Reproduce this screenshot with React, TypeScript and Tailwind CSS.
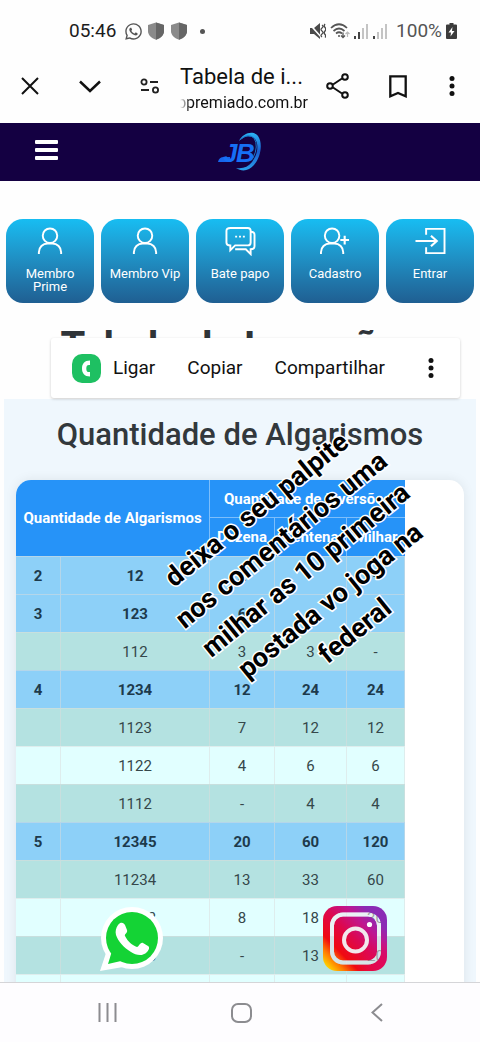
import React from "react"
import { FaWhatsapp } from "react-icons/fa"

type Row = { head?: boolean; cells: string[] }

const rows: Row[] = [
  { head: true, cells: ["2", "12", "2", "-", "-"] },
  { head: true, cells: ["3", "123", "6", "6", "-"] },
  { cells: ["", "112", "3", "3", "-"] },
  { head: true, cells: ["4", "1234", "12", "24", "24"] },
  { cells: ["", "1123", "7", "12", "12"] },
  { cells: ["", "1122", "4", "6", "6"] },
  { cells: ["", "1112", "-", "4", "4"] },
  { head: true, cells: ["5", "12345", "20", "60", "120"] },
  { cells: ["", "11234", "13", "33", "60"] },
  { cells: ["", "11223", "8", "18", "30"] },
  { cells: ["", "11123", "-", "13", "20"] },
  { cells: ["", "", "", "", ""] },
]

const rowColor = (row: Row, index: number) => {
  if (row.head) return "h-[38px] bg-[#8dd0f8] font-bold text-[#1d3a4c]"
  return index % 2 === 0
    ? "h-[38px] bg-[#b4e2e1] text-[#35474a]"
    : "h-[38px] bg-[#e1ffff] text-[#35474a]"
}

const Shield = () => (
  <svg width="18" height="18" viewBox="0 0 18 18">
    <path d="M9 0.5 17 3v6c0 4-3 7-8 8.700C4 16 1 13 1 9V3Z" fill="#8a8a8a" />
    <path d="M9 0.500 17 3v6c0 4-3 7-8 8.700Z" fill="#666" />
  </svg>
)

const Signal = ({ bars }: { bars: number }) => (
  <svg width="15" height="16" viewBox="0 0 15 16">
    {[3, 7, 11, 15].map((h, i) => (
      <rect
        key={h}
        x={i * 4}
        y={16 - h}
        width="2"
        height={h}
        fill={i < bars ? "#444" : "#c4c4c4"}
      />
    ))}
  </svg>
)

const Dots = () => (
  <svg width="6" height="20" viewBox="0 0 6 20" fill="#111">
    <circle cx="3" cy="2.500" r="2.500" />
    <circle cx="3" cy="10" r="2.500" />
    <circle cx="3" cy="17.500" r="2.500" />
  </svg>
)

const StatusBar = () => (
  <div className="flex h-[62px] items-center pr-[23px] pl-[69px] text-[19px] text-[#555]">
    <span className="text-[#1c1c1c]">05:46</span>
    <span className="ml-2 flex items-center gap-1">
      <FaWhatsapp size={19} color="#555" />
      <Shield />
      <span className="ml-px">
        <Shield />
      </span>
    </span>
    <span className="ml-3 size-[5px] rounded-full bg-[#555]" />
    <span className="ml-auto flex items-center gap-1">
      <svg width="16" height="16" viewBox="0 0 16 16">
        <path d="M0 5h4l6-5v16l-6-5H0Z" fill="#4a4a4a" />
        <path d="M0 1.500 12 15" stroke="#fff" strokeWidth="1.500" />
        <path
          d="M12 2q2 1.500 0 3t0 3 0 3 0 3M15 1q-1.500 2 0 3.500t0 3.500 0 3.500 0 3"
          stroke="#4a4a4a"
          strokeWidth="1.300"
          fill="none"
        />
      </svg>
      <svg
        width="20"
        height="16"
        viewBox="0 0 20 16"
        fill="none"
        stroke="#555"
        strokeWidth="1.700"
      >
        <path d="M1 5q8-7.500 16 0M3.500 8q5.500-5 11 0M6 10.500q3-2.500 6 0" />
        <circle cx="9" cy="13" r="1" fill="#555" stroke="none" />
        <path d="M13 9.500v5m-2-2 2 2 2-2" strokeWidth="1.300" />
        <path d="M17.500 14v-5m-2 2 2-2 2 2" stroke="#bbb" strokeWidth="1.200" />
      </svg>
      <Signal bars={2} />
      <Signal bars={1} />
      <span className="ml-1">100%</span>
      <svg width="11" height="16" viewBox="0 0 11 16">
        <path
          d="M3.500 0h4v1.500H10q1 0 1 1V15q0 1-1 1H1q-1 0-1-1V2.500q0-1 1-1h2.500Z"
          fill="#3c3c3c"
        />
        <path d="M6.500 4 2.500 9.500H5L4.500 13.500l4-5.500H6Z" fill="#fff" />
      </svg>
    </span>
  </div>
)

const BrowserBar = () => (
  <div className="flex h-[61px] items-center pr-1 pb-[13px] text-[#111]">
    <button aria-label="Fechar" className="flex w-[60px] justify-center">
      <svg width="18" height="18" viewBox="0 0 18 18">
        <path d="m1 1 16 16M17 1 1 17" stroke="#111" strokeWidth="2" />
      </svg>
    </button>
    <button aria-label="Minimizar" className="flex w-[60px] justify-center">
      <svg width="22" height="13" viewBox="0 0 22 13" fill="none">
        <path d="m1 1.500 10 9.500 10-9.500" stroke="#111" strokeWidth="2.500" />
      </svg>
    </button>
    <button aria-label="Ajustes do site" className="flex w-[60px] justify-center">
      <svg
        width="20"
        height="16"
        viewBox="0 0 20 16"
        fill="none"
        stroke="#222"
        strokeWidth="1.800"
      >
        <circle cx="4" cy="4" r="2.600" />
        <path d="M10 4h8M1 12h8" />
        <circle cx="15.500" cy="12" r="2.600" />
      </svg>
    </button>
    <div className="min-w-0 flex-1 pt-[5px]">
      <div className="truncate text-[22px] leading-7">Tabela de i...</div>
      <div className="flex justify-end overflow-hidden text-[16px] leading-6 mask-l-from-92% mask-l-to-100%">
        <span>bpremiado.com.br</span>
      </div>
    </div>
    <button aria-label="Partilhar" className="flex w-[60px] justify-center">
      <svg
        width="24"
        height="26"
        viewBox="0 0 24 26"
        fill="none"
        stroke="#111"
        strokeWidth="2"
      >
        <path d="m7 11.500 9-6M7 14.500l9 6" />
        <circle cx="4" cy="13" r="2.800" />
        <circle cx="19" cy="4" r="2.800" />
        <circle cx="19" cy="22" r="2.800" />
      </svg>
    </button>
    <button aria-label="Favoritos" className="flex w-[60px] justify-center">
      <svg width="18" height="23" viewBox="0 0 18 23" fill="none">
        <path
          d="M1.300 1.300h15.400v20L9 18l-7.700 3.300Z"
          stroke="#111"
          strokeWidth="2.300"
        />
      </svg>
    </button>
    <button aria-label="Mais" className="flex w-12 justify-center">
      <Dots />
    </button>
  </div>
)

const Logo = () => (
  <svg width="44" height="40" viewBox="0 0 44 40">
    <defs>
      <linearGradient id="ring" x1="0" y1="0" x2="0" y2="1">
        <stop offset="0" stopColor="#2bb4f4" />
        <stop offset="0.500" stopColor="#1a5ed0" />
        <stop offset="1" stopColor="#2aa0ea" />
      </linearGradient>
    </defs>
    <path
      d="M21 9C25 1 35-2 40 4c5 7 3 21-4 29-5 6-12 7-18 3 7 1 12-1 16-6 6-8 7-18 3-23-4-4-10-4-16 2Z"
      fill="url(#ring)"
    />
    <path
      d="M23 7q7-6 13-1 5 8-1 20"
      fill="none"
      stroke="#1877c8"
      strokeWidth="1"
    />
    <path d="M0 30q1-5 6-5h6l1 5Z" fill="#1766ec" />
    <g
      fill="#1670f5"
      fontFamily="Liberation Sans"
      fontSize="26"
      fontStyle="italic"
      fontWeight="700"
    >
      <text x="5" y="30">
        J
      </text>
      <text x="18" y="30">
        B
      </text>
    </g>
  </svg>
)

const Person = () => (
  <>
    <circle cx="16" cy="9" r="7.500" />
    <path d="M4.500 28v-2c0-5 4-9 9-9h5c5 0 9 4 9 9v2" />
  </>
)

const shortcuts = [
  { label: "Membro Prime", icon: <Person /> },
  { label: "Membro Vip", icon: <Person /> },
  {
    label: "Bate papo",
    icon: (
      <>
        <path d="M6 1h18q3 0 3 3v12q0 3-3 3H11l-5 5v-5q-4 0-4-3V4q0-3 4-3Z" />
        <path d="M27 5q4 0 4 3v12q0 3-4 3v5l-5-5H11" />
        <path d="M11 10h2m2 0h2m2 0h2" strokeWidth="2" />
      </>
    ),
  },
  {
    label: "Cadastro",
    icon: (
      <g transform="translate(-3 0)">
        <Person />
        <path d="M29 9v9M24.500 13.500h9" strokeWidth="2.200" />
      </g>
    ),
  },
  {
    label: "Entrar",
    icon: (
      <>
        <path d="M12 8V2h19v25H12v-6" />
        <path d="M1 14.500h22m-6-5.500 6 5.500-6 5.500" strokeWidth="2.200" />
      </>
    ),
  },
]

const Shortcuts = () => (
  <div className="mt-[38px] grid grid-cols-5 gap-[7px] px-[6px]">
    {shortcuts.map(({ label, icon }) => (
      <a
        key={label}
        href="#"
        className="flex h-[84px] flex-col items-center rounded-[17px] bg-linear-to-b from-[#17bdf2] to-[#1f5f92] px-2 pt-[7px] text-center text-[13px] leading-[13px] text-white"
      >
        <svg
          className="mb-[11px] h-[30px] w-[36px] shrink-0"
          viewBox="-2 -1 36 31"
          fill="none"
          stroke="#fff"
          strokeWidth="2"
        >
          {icon}
        </svg>
        <span className={label === "Membro Prime" ? "w-14" : ""}>{label}</span>
      </a>
    ))}
  </div>
)

const SelectionMenu = () => (
  <div className="absolute inset-x-0 top-[157px] mr-5 ml-[51px] flex h-[60px] items-center rounded-[3px] bg-white pr-[26px] pl-[21px] text-[19px] text-[#111] shadow-[0_1px_3px_rgba(0,0,0,0.2)]">
    <button className="flex items-center gap-3">
      <svg width="29" height="29" viewBox="0 0 29 29">
        <rect width="29" height="29" rx="10" fill="#1ec062" />
        <path
          d="M18 6.500c-5.500 0-8 3.500-8 8s2.500 8 8 8v-4.500c-2.500.5-3.700-.5-3.700-3.500s1.200-4 3.700-3.500Z"
          fill="#fff"
        />
      </svg>
      Ligar
    </button>
    <button className="ml-8">Copiar</button>
    <button className="ml-8">Compartilhar</button>
    <button aria-label="Mais opções" className="ml-auto">
      <Dots />
    </button>
  </div>
)

const InversionTable = () => (
  <table className="w-[389px] table-fixed border-separate border-spacing-0 text-center text-[15px] leading-5">
    <colgroup>
      <col className="w-[45px]" />
      <col className="w-[149px]" />
      <col className="w-[65px]" />
      <col className="w-[72px]" />
      <col className="w-[58px]" />
    </colgroup>
    <thead className="bg-[#2693f8] text-white">
      <tr className="h-[38px]">
        <th colSpan={2} rowSpan={2} className="border-r border-white/40">
          Quantidade de Algarismos
        </th>
        <th colSpan={3} className="border-b border-white/40 whitespace-nowrap">
          Quantidade de Inversões
        </th>
      </tr>
      <tr className="h-[38px]">
        <th className="border-r border-white/40">Dezena</th>
        <th className="border-r border-white/40">Centena</th>
        <th>Milhar</th>
      </tr>
    </thead>
    <tbody>
      {rows.map((row, i) => (
        <tr key={i} className={rowColor(row, i)}>
          {row.cells.map((cell, j) => (
            <td key={j} className="border-t border-r border-[#dcdcdc]/50">
              {cell}
            </td>
          ))}
        </tr>
      ))}
    </tbody>
  </table>
)

const Caption = () => (
  <div className="absolute top-[292px] left-[156px] w-[300px] rotate-[-39deg] text-center text-[27px] leading-[39px] font-bold whitespace-nowrap text-black [-webkit-text-stroke:3px_white] [paint-order:stroke_fill]">
    deixa o seu palpite
    <br />
    nos comentários uma
    <br />
    milhar as 10 primeira
    <br />
    postada vo joga na
    <br />
    federal
  </div>
)

const WhatsappSticker = () => (
  <svg width="64" height="66" viewBox="0 0 64 66">
    <g fill="#fff">
      <circle cx="32" cy="32" r="31" />
      <path d="M0 65 7 44l16 17Z" />
    </g>
    <g fill="#14d335">
      <circle cx="32" cy="32" r="26" />
      <path d="m8 58 4-13 9 10Z" />
    </g>
    <path
      d="M18 19c3-4 6-2 7 0l2 5c1 3-3 4-2 6 3 6 7 9 12 11 2 0 3-5 6-4l5 3c2 1 1 4-1 6-5 5-11 3-16 0-7-4-13-11-15-17-1-4 0-7 2-10Z"
      fill="#fff"
    />
  </svg>
)

const InstagramSticker = () => (
  <svg width="64" height="65" viewBox="0 0 64 65">
    <defs>
      <linearGradient id="insta" x1="0" y1="1" x2="1" y2="0">
        <stop offset="0.060" stopColor="#ffd500" />
        <stop offset="0.170" stopColor="#ff7a00" />
        <stop offset="0.280" stopColor="#f00a10" />
        <stop offset="0.500" stopColor="#dc0850" />
        <stop offset="0.680" stopColor="#bf1690" />
        <stop offset="0.820" stopColor="#8b2bb5" />
      </linearGradient>
      <radialGradient id="corner" cx="1" cy="1" r="0.500">
        <stop offset="0" stopColor="#e3085a" />
        <stop offset="1" stopColor="#e3085a" stopOpacity="0" />
      </radialGradient>
      <mask id="frame">
        <rect width="64" height="65" rx="14" fill="#fff" />
        <rect
          x="9"
          y="8.500"
          width="47"
          height="48"
          rx="11"
          fill="none"
          stroke="#000"
          strokeWidth="4"
        />
      </mask>
    </defs>
    <g mask="url(#frame)">
      <rect width="64" height="65" fill="url(#insta)" />
      <rect width="64" height="65" fill="url(#corner)" />
    </g>
    <g fill="none" stroke="#f2e8ec" strokeWidth="4">
      <rect x="9" y="8.500" width="47" height="48" rx="11" opacity="0.550" />
      <circle cx="32.500" cy="34" r="11.500" />
    </g>
    <circle cx="46.500" cy="18.500" r="2.600" fill="#fff" />
  </svg>
)

const SystemNav = () => (
  <nav className="grid h-[60px] shrink-0 grid-cols-3 border-t border-[#d5d5d8] bg-[#fefdff] pr-9 pl-10">
    <button aria-label="Recentes" className="flex items-center justify-center">
      <svg width="19" height="19" viewBox="0 0 19 19">
        <path
          d="M1.500 0v19M9.500 0v19M17.500 0v19"
          stroke="#8c8c90"
          strokeWidth="2"
        />
      </svg>
    </button>
    <button aria-label="Início" className="flex items-center justify-center">
      <svg width="21" height="20" viewBox="0 0 21 20" fill="none">
        <rect
          x="1"
          y="1"
          width="19"
          height="18"
          rx="6"
          stroke="#8c8c90"
          strokeWidth="2"
        />
      </svg>
    </button>
    <button aria-label="Voltar" className="flex items-center justify-center">
      <svg width="12" height="19" viewBox="0 0 12 19" fill="none">
        <path d="m11 1-9.500 8.500L11 18" stroke="#8c8c90" strokeWidth="2" />
      </svg>
    </button>
  </nav>
)

export default function App() {
  return (
    <div className="flex h-screen flex-col overflow-hidden bg-[#fefefe] font-[Roboto,sans-serif]">
      <StatusBar />
      <BrowserBar />
      <header className="grid h-[58px] shrink-0 grid-cols-3 items-center bg-[#140042]">
        <button aria-label="Menu" className="ml-[35px] w-fit pb-1">
          <svg width="23" height="20" viewBox="0 0 23 20" fill="#fff">
            <rect width="23" height="4" rx="1" />
            <rect y="8" width="23" height="4" rx="1" />
            <rect y="16" width="23" height="4" rx="1" />
          </svg>
        </button>
        <div className="flex justify-center">
          <Logo />
        </div>
      </header>

      <main className="relative min-h-0 flex-1 overflow-hidden">
        <Shortcuts />
        <h1 className="mt-[20px] h-[76px] text-center text-[40px] leading-[48px] font-bold whitespace-nowrap text-[#2f3438]">
          Tabela de Inversões
        </h1>
        <section className="mx-1 bg-[#eff7fd] px-3 pt-[18px]">
          <h2 className="mb-[27px] text-center text-[31px] leading-9 font-medium whitespace-nowrap text-[#32383c]">
            Quantidade de Algarismos
          </h2>
          <div className="overflow-hidden rounded-[15px] bg-white shadow-[0_0_12px_rgba(0,0,0,0.08)]">
            <InversionTable />
          </div>
        </section>

        <SelectionMenu />
        <Caption />
        <a
          href="#"
          aria-label="WhatsApp"
          className="absolute bottom-[10px] left-[100px]"
        >
          <WhatsappSticker />
        </a>
        <a
          href="#"
          aria-label="Instagram"
          className="absolute right-[93px] bottom-[11px]"
        >
          <InstagramSticker />
        </a>
      </main>
      <SystemNav />
    </div>
  )
}
